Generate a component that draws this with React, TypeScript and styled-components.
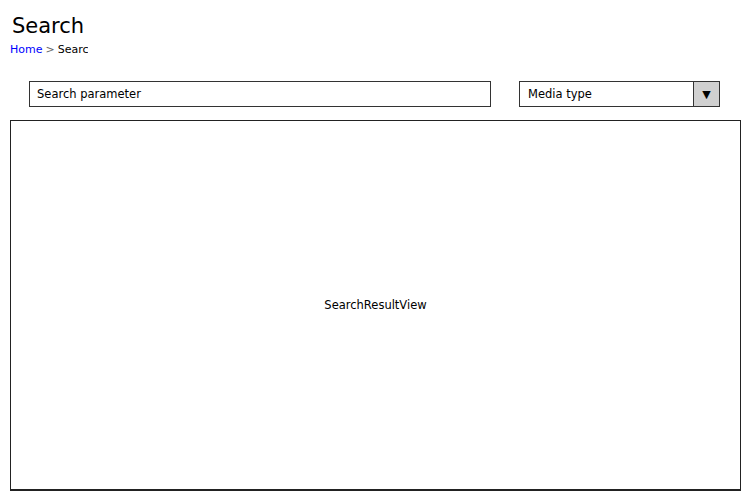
import React from 'react';
import styled, { createGlobalStyle } from 'styled-components';

const GlobalStyle = createGlobalStyle`
  html, body {
    margin: 0;
    padding: 0;
    background: #ffffff;
  }
  body {
    font-family: "Comic Sans MS", "DejaVu Sans", sans-serif;
    color: #000;
  }
`;

const Page = styled.div`
  width: 750px;
  height: 500px;
  box-sizing: border-box;
  padding: 12px 9px 0 10px;
  display: flex;
  flex-direction: column;
`;

const Title = styled.h1`
  margin: 0 0 0 2px;
  font-size: 21px;
  font-weight: normal;
  line-height: 28px;
`;

const Breadcrumb = styled.div`
  width: 78px;
  overflow: hidden;
  white-space: nowrap;
  font-size: 11px;
  line-height: 16px;
  margin-top: 2px;
`;

const Crumb = styled.a`
  color: #0000ff;
  text-decoration: none;
`;

const Separator = styled.span`
  color: #666;
  margin: 0 3px;
`;

const Toolbar = styled.div`
  display: flex;
  align-items: center;
  justify-content: space-between;
  padding: 0 21px 0 19px;
  margin-top: 22px;
`;

const SearchInput = styled.div`
  width: 462px;
  height: 26px;
  box-sizing: border-box;
  border: 1px solid #333;
  display: flex;
  align-items: center;
  padding-left: 7px;
  font-size: 11.5px;
`;

const Select = styled.div`
  width: 201px;
  height: 26px;
  box-sizing: border-box;
  border: 1px solid #333;
  display: flex;
  margin-top: 1px;
`;

const SelectLabel = styled.div`
  flex: 1;
  display: flex;
  align-items: center;
  padding-left: 8px;
  font-size: 11.5px;
`;

const SelectButton = styled.div`
  width: 25px;
  background: #d0d0d0;
  border-left: 1px solid #333;
  display: flex;
  align-items: center;
  justify-content: center;
  font-size: 11px;
`;

const ResultView = styled.div`
  margin-top: 13px;
  height: 371px;
  box-sizing: border-box;
  border: 1px solid #222;
  border-bottom-width: 2px;
  display: flex;
  align-items: center;
  justify-content: center;
  font-size: 11.5px;
`;

const App: React.FC = () => {
  return (
    <>
      <GlobalStyle />
      <Page>
        <Title>Search</Title>
        <Breadcrumb>
          <Crumb href="#">Home</Crumb>
          <Separator>&gt;</Separator>
          Search
        </Breadcrumb>
        <Toolbar>
          <SearchInput>Search parameter</SearchInput>
          <Select>
            <SelectLabel>Media type</SelectLabel>
            <SelectButton>▼</SelectButton>
          </Select>
        </Toolbar>
        <ResultView>SearchResultView</ResultView>
      </Page>
    </>
  );
};

export default App;
